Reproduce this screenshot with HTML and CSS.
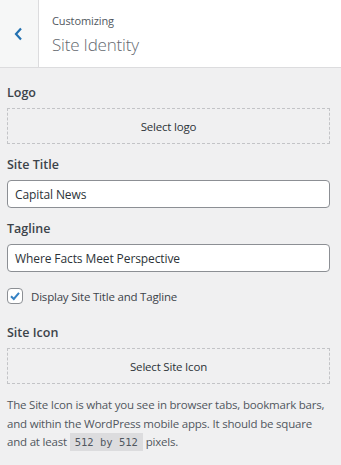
FILE: index.html
```html
<!DOCTYPE html>
<html>
<head>
<meta charset="utf-8">
<link rel="stylesheet" href="styles.css">
</head>
<body>
<div class="header">
  <button class="back" aria-label="Back">
    <svg width="12" height="14" viewBox="0 0 12 14"><path d="M8 1.5 L3 7 L8 12.5" fill="none" stroke="#2271b1" stroke-width="2.2"/></svg>
  </button>
  <div class="titles">
    <div class="sub">Customizing</div>
    <div class="title">Site Identity</div>
  </div>
</div>
<div class="panel">
  <div class="control">
    <div class="label">Logo</div>
    <div class="dashed">Select logo</div>
  </div>
  <div class="control">
    <div class="label">Site Title</div>
    <div class="input">Capital News</div>
  </div>
  <div class="control">
    <div class="label">Tagline</div>
    <div class="input">Where Facts Meet Perspective</div>
  </div>
  <div class="check">
    <span class="box"><svg width="14" height="14" viewBox="0 0 14 14"><path d="M3 7.2 L5.8 10 L11 3.8" fill="none" stroke="#3582c4" stroke-width="2"/></svg></span>
    <span>Display Site Title and Tagline</span>
  </div>
  <div class="control">
    <div class="label">Site Icon</div>
    <div class="dashed">Select Site Icon</div>
  </div>
  <p class="desc">The Site Icon is what you see in browser tabs, bookmark bars, and within the WordPress mobile apps. It should be square and at least <code>512 by 512</code> pixels.</p>
</div>
</body>
</html>
```
FILE: styles.css
```css
html, body { margin: 0; padding: 0; }
body {
  background: #f0f0f1;
  font-family: "Open Sans", "Noto Sans", sans-serif;
  color: #3c434a;
  width: 341px;
  height: 465px;
  overflow: hidden;
}
.header {
  display: flex;
  height: 67px;
  background: #fff;
  border-bottom: 1px solid #dcdcde;
}
.back {
  width: 39px;
  border: 0;
  border-right: 1px solid #dcdcde;
  background: #f6f7f7;
  padding: 0;
  display: flex;
  align-items: center;
  justify-content: center;
}
.titles {
  padding: 13px 0 0 13px;
}
.sub {
  font-size: 11px;
  letter-spacing: -0.1px;
  color: #50575e;
  line-height: 16px;
}
.title {
  font-size: 17px;
  letter-spacing: -0.2px;
  color: #646970;
  line-height: 26px;
  margin-top: 3px;
  font-weight: 300;
}
.panel {
  padding: 16px 11px 0 7px;
}
.control { margin-bottom: 12px; }
.label {
  font-size: 12.5px;
  font-weight: 600;
  color: #3c434a;
  line-height: 18px;
  margin-bottom: 6px;
}
.control .input { margin-top: 1px; }
.dashed {
  height: 34px;
  border: 1px dashed #c3c4c7;
  display: flex;
  align-items: center;
  justify-content: center;
  font-size: 11.5px;
  letter-spacing: -0.2px;
  color: #2c3338;
}
.input {
  height: 26px;
  background: #fff;
  border: 1px solid #8c8f94;
  border-radius: 4px;
  padding: 0 7px;
  display: flex;
  align-items: center;
  font-size: 12px;
  letter-spacing: -0.1px;
  color: #2c3338;
}
.check {
  display: flex;
  align-items: center;
  gap: 8px;
  font-size: 11.5px;
  letter-spacing: -0.2px;
  color: #3c434a;
  margin: 16px 0 20px;
}
.box {
  width: 14px;
  height: 14px;
  border: 1px solid #8c8f94;
  border-radius: 4px;
  background: #fff;
  display: flex;
  align-items: center;
  justify-content: center;
}
.desc {
  margin: 0;
  font-size: 11.5px;
  letter-spacing: -0.2px;
  line-height: 18.5px;
  color: #50575e;
}
code {
  display: inline-block;
  font-family: "DejaVu Sans Mono", monospace;
  font-size: 10.5px;
  line-height: 18px;
  letter-spacing: 0;
  background: #dcdcde;
  padding: 0 5px;
  color: #50575e;
}
```
